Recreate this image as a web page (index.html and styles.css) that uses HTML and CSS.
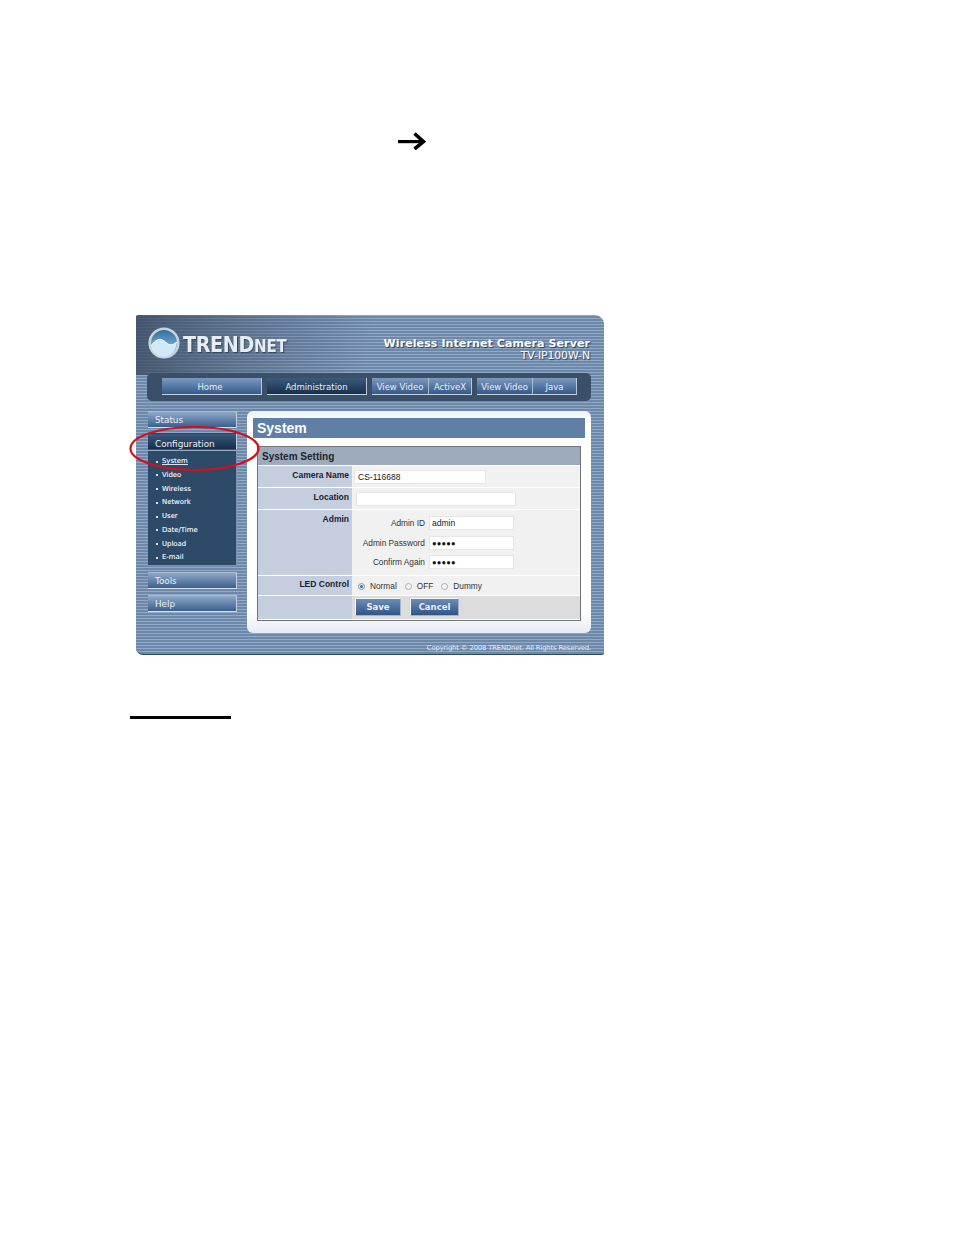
FILE: index.html
```html
<!DOCTYPE html>
<html lang="en">
<head>
<meta charset="utf-8">
<title>System Setting</title>
<link rel="stylesheet" href="styles.css">
</head>
<body>
<div class="page">
  <svg class="arrow" viewBox="0 0 28 18" width="28" height="18" aria-hidden="true">
    <path d="M0 9.6H25" fill="none" stroke="#000" stroke-width="3.2"/>
    <path d="M16.500 1.500L25.500 9.600L16.500 17" fill="none" stroke="#000" stroke-width="3.6"/>
  </svg>

  <div class="panel">
    <header class="top">
      <div class="logo">
        <svg class="globe" viewBox="0 0 32 32" width="32" height="32" aria-hidden="true">
          <defs>
            <linearGradient id="gl" x1="0" y1="0" x2="0" y2="1">
              <stop offset="0" stop-color="#2c6a9c"/>
              <stop offset="1" stop-color="#9fd4ee"/>
            </linearGradient>
          </defs>
          <circle cx="16" cy="16" r="14.300" fill="url(#gl)" stroke="#c9d3de" stroke-width="2.600"/>
          <path d="M3 19C9 11 13 11 17 15C21 19 25 19 29 15C28 24 23 29.500 16 29.500C9 29.500 4 25 3 19Z" fill="#cfe9f6"/>
          <path d="M3 19C9 11 13 11 17 15C21 19 25 19 29 15" fill="none" stroke="#e9f4fa" stroke-width="1.200"/>
        </svg>
        <span class="brand">TREND<span class="brand-sm">NET</span></span>
      </div>
      <div class="product">
        <div class="product-name">Wireless Internet Camera Server</div>
        <div class="product-model">TV-IP100W-N</div>
      </div>
    </header>

    <nav class="nav">
      <a class="tab tab-home">Home</a>
      <a class="tab tab-active">Administration</a>
      <div class="tab tab-split"><span>View Video</span><span>ActiveX</span></div>
      <div class="tab tab-split tab-java"><span>View Video</span><span>Java</span></div>
    </nav>

    <div class="main">
      <aside class="side">
        <a class="side-btn">Status</a>
        <a class="side-btn side-active">Configuration</a>
        <ul class="sub">
          <li class="sub-current">System</li>
          <li>Video</li>
          <li>Wireless</li>
          <li>Network</li>
          <li>User</li>
          <li>Date/Time</li>
          <li>Upload</li>
          <li>E-mail</li>
        </ul>
        <a class="side-btn side-tools">Tools</a>
        <a class="side-btn side-help">Help</a>
      </aside>

      <section class="card">
        <h1 class="card-title">System</h1>
        <div class="form">
          <h2 class="form-head">System Setting</h2>
          <div class="row row-name">
            <div class="lab">Camera Name</div>
            <div class="val"><span class="input input-name">CS-116688</span></div>
          </div>
          <div class="row row-loc">
            <div class="lab">Location</div>
            <div class="val val-loc"><span class="input input-loc"></span></div>
          </div>
          <div class="row row-admin">
            <div class="lab">Admin</div>
            <div class="val val-admin">
              <label class="pair"><span>Admin ID</span><span class="input input-admin">admin</span></label>
              <label class="pair"><span>Admin Password</span><span class="input input-admin dots">●●●●●</span></label>
              <label class="pair"><span>Confirm Again</span><span class="input input-admin dots">●●●●●</span></label>
            </div>
          </div>
          <div class="row row-led">
            <div class="lab lab-led">LED Control</div>
            <div class="val val-led">
              <span class="radio radio-on"></span><span class="opt">Normal</span>
              <span class="radio"></span><span class="opt">OFF</span>
              <span class="radio"></span><span class="opt">Dummy</span>
            </div>
          </div>
          <div class="row row-btn">
            <div class="lab"></div>
            <div class="val val-btn">
              <a class="btn">Save</a>
              <a class="btn btn-cancel">Cancel</a>
            </div>
          </div>
        </div>
      </section>
    </div>

    <footer class="copy">Copyright © 2008 TRENDnet. All Rights Reserved.</footer>

    <svg class="ring" viewBox="0 0 132 46" width="132" height="46" aria-hidden="true">
      <ellipse cx="65.500" cy="22.500" rx="64" ry="21.500" fill="none" stroke="#d2101e" stroke-width="2.200"/>
    </svg>
  </div>

  <div class="rule"></div>
</div>
</body>
</html>
```
FILE: styles.css
```css
* { box-sizing: border-box; }
html, body { margin: 0; padding: 0; background: #fff; }
body { font-family: "Liberation Sans", Arial, sans-serif; }
.page { width: 954px; height: 1235px; padding-top: 132px; overflow: hidden; }
.arrow { display: block; margin-left: 398px; }

.panel {
  position: relative;
  width: 468px;
  height: 340px;
  margin: 165px 0 0 136px;
  padding: 0 13px 0 11px;
  border-radius: 2px 9px 2px 7px;
  border-bottom: 1px solid #33495f;
  display: flex;
  flex-direction: column;
  background:
    linear-gradient(100deg, rgba(56,72,92,.8) 0, rgba(66,84,106,.45) 22%, rgba(90,115,145,0) 50%) no-repeat 0 0 / 100% 60px,
    repeating-linear-gradient(180deg, #93a9c5 0, #93a9c5 1.500px, #6c88ab 1.500px, #6c88ab 3px);
}

.top { height: 58px; flex: none; display: flex; justify-content: space-between; padding-right: 1px; }
.logo { display: flex; align-items: center; gap: 3px; margin-top: -1px; height: 58px; }
.globe { display: block; margin-left: 1px; }
.brand {
  font: bold 21.500px "DejaVu Sans", sans-serif;
  color: #e8edf3;
  letter-spacing: -.4px;
  text-shadow: 1px 1px 1px #33465c;
  line-height: 1;
  margin-top: 3px;
  transform: scaleX(.89);
  transform-origin: left center;
}
.brand-sm { font-size: 17px; letter-spacing: -.2px; }
.product { text-align: right; padding-top: 22px; color: #fff; text-shadow: 1px 1px 1px #2b3f56; }
.product-name { font: bold 11px/13px "DejaVu Sans", sans-serif; letter-spacing: .1px; }
.product-model { font: 10.800px/12px "DejaVu Sans", sans-serif; letter-spacing: -.05px; }

.nav {
  height: 28px;
  flex: none;
  background: #3a5069;
  border-radius: 5px;
  display: flex;
  gap: 5px;
  padding: 5px 0 0 15px;
}
.tab, .side-btn, .btn { font-family: "DejaVu Sans", sans-serif; color: #e9eff6; }
.tab {
  width: 100px;
  height: 17px;
  font-size: 8.500px;
  line-height: 18px;
  text-align: center;
  background: linear-gradient(180deg, #7d9ac0, #355a8a);
  border-bottom: 1px solid #c8d4e2;
  border-right: 1px solid #b7c6d8;
}
.tab-home { padding-right: 3px; }
.tab-active { background: linear-gradient(180deg, #3c5a7c, #16304e); }
.tab-split { display: flex; }
.tab-split span { flex: 1; }
.tab-split span:first-child { flex: none; width: 57px; border-right: 1px solid #a9bcd2; }
.tab-java span:first-child { width: 56px; }

.main { flex: none; height: 222px; margin-top: 10px; display: flex; gap: 10px; }
.side { width: 89px; flex: none; margin-left: 1px; display: flex; flex-direction: column; }
.side-btn {
  display: block;
  height: 17px;
  font-size: 8.800px;
  line-height: 17px;
  padding-left: 7px;
  background: linear-gradient(180deg, #8fa9c8, #3c5f8e);
  border-top: 1px solid #a8bbd2;
  border-bottom: 1px solid #d8e0ea;
  border-right: 1px solid #c0cede;
}
.side-active {
  margin-top: 5px;
  line-height: 20px;
  background: linear-gradient(180deg, #3c5a7c, #152e4c);
  border-top-color: #2d4763;
  border-bottom-color: #3a5572;
}
.sub {
  list-style: none;
  margin: 1px 0 0;
  padding: 4px 0 0 7px;
  height: 115px;
  background: #2d4a69;
  border-right: 1px solid #7d93ae;
  border-bottom: 1px solid #7d93ae;
}
.sub li {
  position: relative;
  height: 13.750px;
  padding-left: 7px;
  font: 6.900px/13.750px "DejaVu Sans", sans-serif;
  color: #d8e1ec;
  text-shadow: 0 0 .4px #d8e1ec;
}
.sub li::before {
  content: "";
  position: absolute;
  left: 1px;
  top: 5.500px;
  width: 2px;
  height: 2px;
  background: #d8e1ec;
}
.sub-current { text-decoration: underline; color: #fff; font-weight: bold; }
.side-tools { margin-top: 6px; }
.side-help { margin-top: 6px; }

.card {
  flex: none;
  width: 344px;
  height: 222px;
  background: linear-gradient(180deg, #eef2f6, #ffffff 12px, #ffffff 200px, #e6ebf1);
  border-radius: 6px;
  padding: 7px 6px 0;
}
.card-title {
  margin: 0;
  height: 20px;
  padding-left: 4px;
  background: #5f7fa6;
  color: #fff;
  font: bold 14px/20px "Liberation Sans", sans-serif;
}
.form {
  width: 324px;
  height: 175px;
  margin: 8px 0 0 4px;
  border: 1px solid #6f7378;
  display: flex;
  flex-direction: column;
  background: #fff;
}
.form-head {
  margin: 0;
  height: 18px;
  flex: none;
  padding-left: 4px;
  background: #9dabbc;
  color: #1c2530;
  font: bold 10px/19px "Liberation Sans", sans-serif;
}
.row { display: flex; border-top: 1px solid #fff; flex: none; }
.lab {
  flex: none;
  width: 94px;
  padding: 4px 3px 0 0;
  background: #c5cede;
  text-align: right;
  color: #1a2230;
  font: bold 8.500px/10px "Liberation Sans", sans-serif;
}
.lab-led { padding-top: 3px; }
.val { flex: 1; background: #f1f1f1; position: relative; }
.row-name { height: 22px; margin-top: 0; }
.row-loc { height: 22px; }
.row-admin { height: 66px; }
.row-led { height: 20px; }
.row-btn { height: 24px; }
.row-name .val { padding: 4px 0 0 2px; }
.input {
  display: block;
  height: 14px;
  background: #fff;
  border: 1px solid #e6e6e6;
  color: #222;
  font: 8.500px/13px "Liberation Sans", sans-serif;
  padding-left: 3px;
}
.input-name { width: 132px; }
.val-loc { padding: 4px 0 0 4px; }
.input-loc { width: 160px; }
.val-admin { padding: 6px 0 0; display: flex; flex-direction: column; gap: 5.500px; }
.pair {
  display: flex;
  justify-content: flex-end;
  align-items: center;
  width: 162px;
  gap: 4px;
  font: 8.300px/14px "Liberation Sans", sans-serif;
  color: #333;
}
.input-admin { width: 85px; flex: none; padding-left: 2px; }
.dots { font-size: 7.500px; letter-spacing: .2px; color: #111; }
.val-led {
  display: flex;
  align-items: center;
  padding: 1px 0 0 6px;
  font: 8.300px/12px "Liberation Sans", sans-serif;
  color: #333;
}
.radio {
  width: 7px;
  height: 7px;
  border-radius: 50%;
  border: 1px solid #a9adb3;
  background: #f5f5f5;
  margin-right: 5px;
}
.radio-on { background: #2a6ea8; box-shadow: inset 0 0 0 1px #fff; }
.opt { margin-right: 8px; }
.val-btn { background: #dcdcdc; padding: 2px 0 0 3px; display: flex; gap: 9px; }
.btn {
  display: block;
  width: 46px;
  height: 18px;
  text-align: center;
  font-size: 8.500px;
  font-weight: bold;
  line-height: 17px;
  background: linear-gradient(180deg, #6d8cb4, #2f5688);
  border: 1px solid #d7dde4;
  border-color: #f2f4f6 #aab4c0 #aab4c0 #f2f4f6;
}
.btn-cancel { width: 49px; }

.copy {
  margin-top: 10px;
  text-align: right;
  font: 6.800px/10px "DejaVu Sans", sans-serif;
  letter-spacing: -.14px;
  color: #e4eaf1;
}
.ring { position: absolute; left: -7.500px; top: 111px; }
.rule { width: 101px; height: 3px; margin: 61px 0 0 130px; background: #000; }
```
